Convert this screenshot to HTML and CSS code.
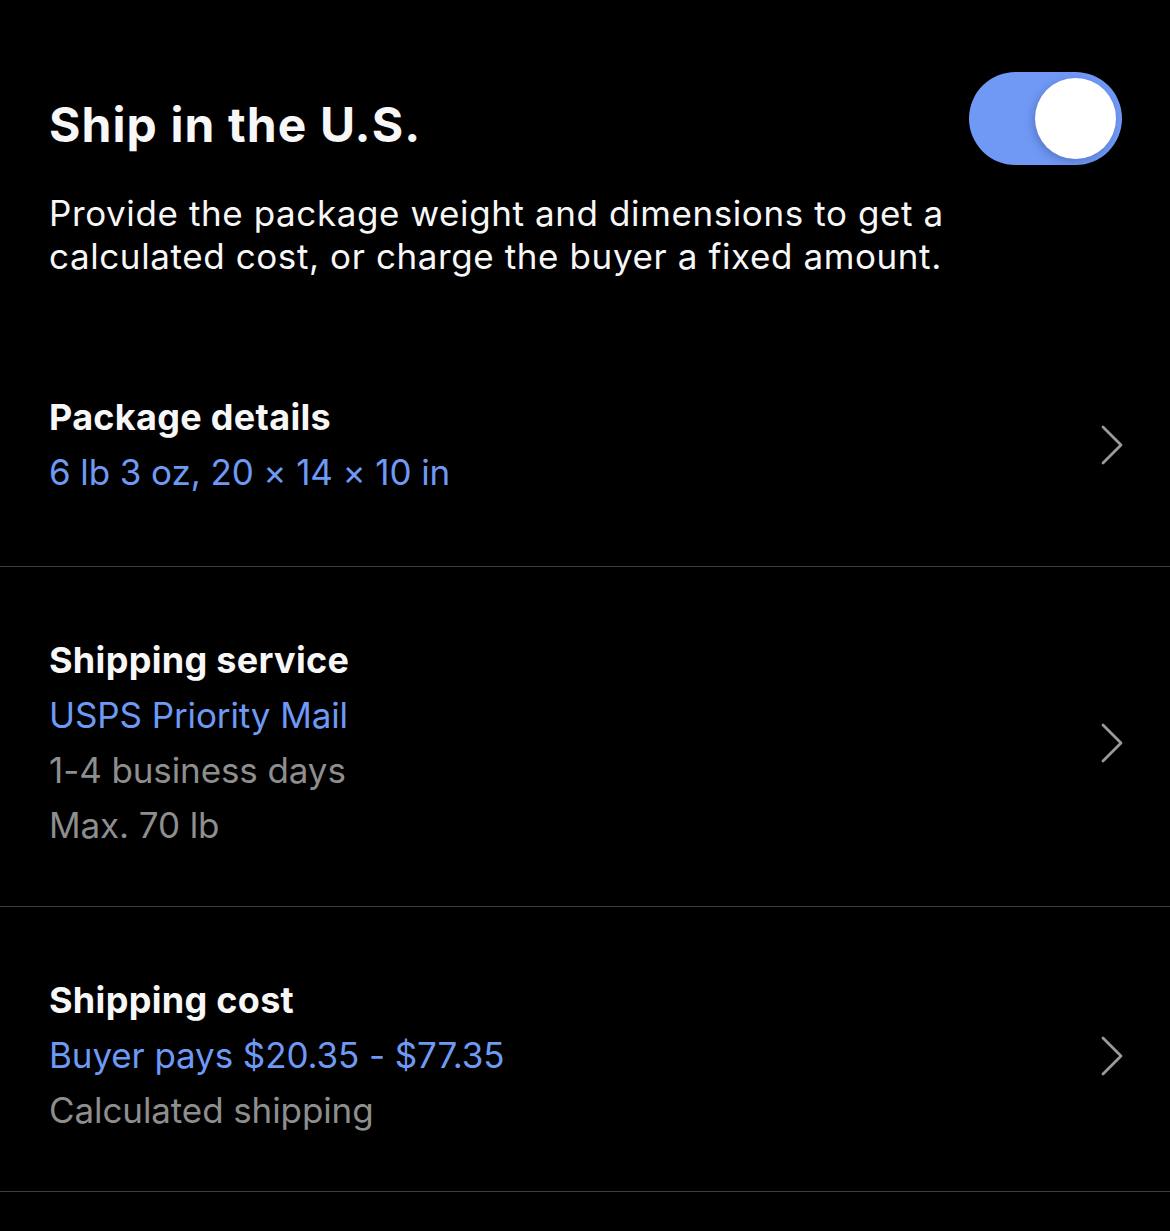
FILE: index.html
```html
<!DOCTYPE html>
<html lang="en">
<head>
<meta charset="utf-8">
<title>Ship in the U.S.</title>
<link rel="stylesheet" href="styles.css">
</head>
<body>
<main class="page">
  <header class="header">
    <h1 class="title">Ship in the U.S.</h1>
    <div class="toggle" role="switch" aria-checked="true"><span class="knob"></span></div>
  </header>
  <p class="desc">Provide the package weight and dimensions to get a calculated cost, or charge the buyer a fixed amount.</p>

  <ul class="list">
    <li class="row row-first">
      <div class="content">
        <div class="label">Package details</div>
        <div class="value">6 lb 3 oz, 20 × 14 × 10 in</div>
      </div>
      <svg class="chev" viewBox="0 0 24 40" width="24" height="40" aria-hidden="true"><path d="M3 2 L21 20 L3 38" fill="none" stroke="#9a9a9a" stroke-width="2.8" stroke-linecap="round" stroke-linejoin="round"/></svg>
    </li>
    <li class="row">
      <div class="content">
        <div class="label">Shipping service</div>
        <div class="value">USPS Priority Mail</div>
        <div class="meta">1-4 business days</div>
        <div class="meta">Max. 70 lb</div>
      </div>
      <svg class="chev" viewBox="0 0 24 40" width="24" height="40" aria-hidden="true"><path d="M3 2 L21 20 L3 38" fill="none" stroke="#9a9a9a" stroke-width="2.8" stroke-linecap="round" stroke-linejoin="round"/></svg>
    </li>
    <li class="row">
      <div class="content">
        <div class="label">Shipping cost</div>
        <div class="value">Buyer pays $20.35 - $77.35</div>
        <div class="meta">Calculated shipping</div>
      </div>
      <svg class="chev" viewBox="0 0 24 40" width="24" height="40" aria-hidden="true"><path d="M3 2 L21 20 L3 38" fill="none" stroke="#9a9a9a" stroke-width="2.8" stroke-linecap="round" stroke-linejoin="round"/></svg>
    </li>
  </ul>
</main>
</body>
</html>
```

FILE: styles.css
```css
html, body {
  margin: 0;
  padding: 0;
  background: #000;
}
body {
  font-family: Inter, "Noto Sans", "Liberation Sans", sans-serif;
  color: #f7f7f7;
  height: 1231px;
  overflow: hidden;
}
.page {
  padding-top: 72px;
}
.header {
  display: flex;
  align-items: center;
  justify-content: space-between;
  padding: 0 48px 0 49px;
}
.title {
  margin: 0;
  font-size: 48px;
  font-weight: 700;
  letter-spacing: 1.1px;
  line-height: 56px;
  padding-top: 12px;
}
.toggle {
  width: 153px;
  height: 93px;
  border-radius: 47px;
  background: #7099f5;
  position: relative;
  flex-shrink: 0;
}
.knob {
  position: absolute;
  top: 6px;
  right: 6px;
  width: 81px;
  height: 81px;
  border-radius: 50%;
  background: #fff;
  box-shadow: -2px 3px 8px rgba(40, 60, 120, 0.35);
}
.desc {
  margin: 27px 48px 0 49px;
  max-width: 960px;
  font-size: 35px;
  line-height: 43px;
  font-weight: 400;
  color: #f7f7f7;
  letter-spacing: 0.6px;
}
.list {
  list-style: none;
  margin: 0;
  padding: 0;
  margin-top: 47px;
}
.row {
  display: flex;
  align-items: center;
  justify-content: space-between;
  padding: 66px 48px 53px 49px;
  border-bottom: 1px solid #3f3f3f;
}
.row-first {
  padding-top: 65px;
  padding-bottom: 66px;
}
.content {
  display: flex;
  flex-direction: column;
}
.label, .value, .meta {
  font-size: 35px;
  line-height: 55px;
  letter-spacing: -0.1px;
}
.label {
  font-size: 36px;
  font-weight: 700;
  letter-spacing: 0.3px;
  color: #f7f7f7;
}
.value {
  color: #6e9af5;
}
.meta {
  color: #8e8e8e;
}
.chev {
  flex-shrink: 0;
  margin-right: -2px;
}
```
